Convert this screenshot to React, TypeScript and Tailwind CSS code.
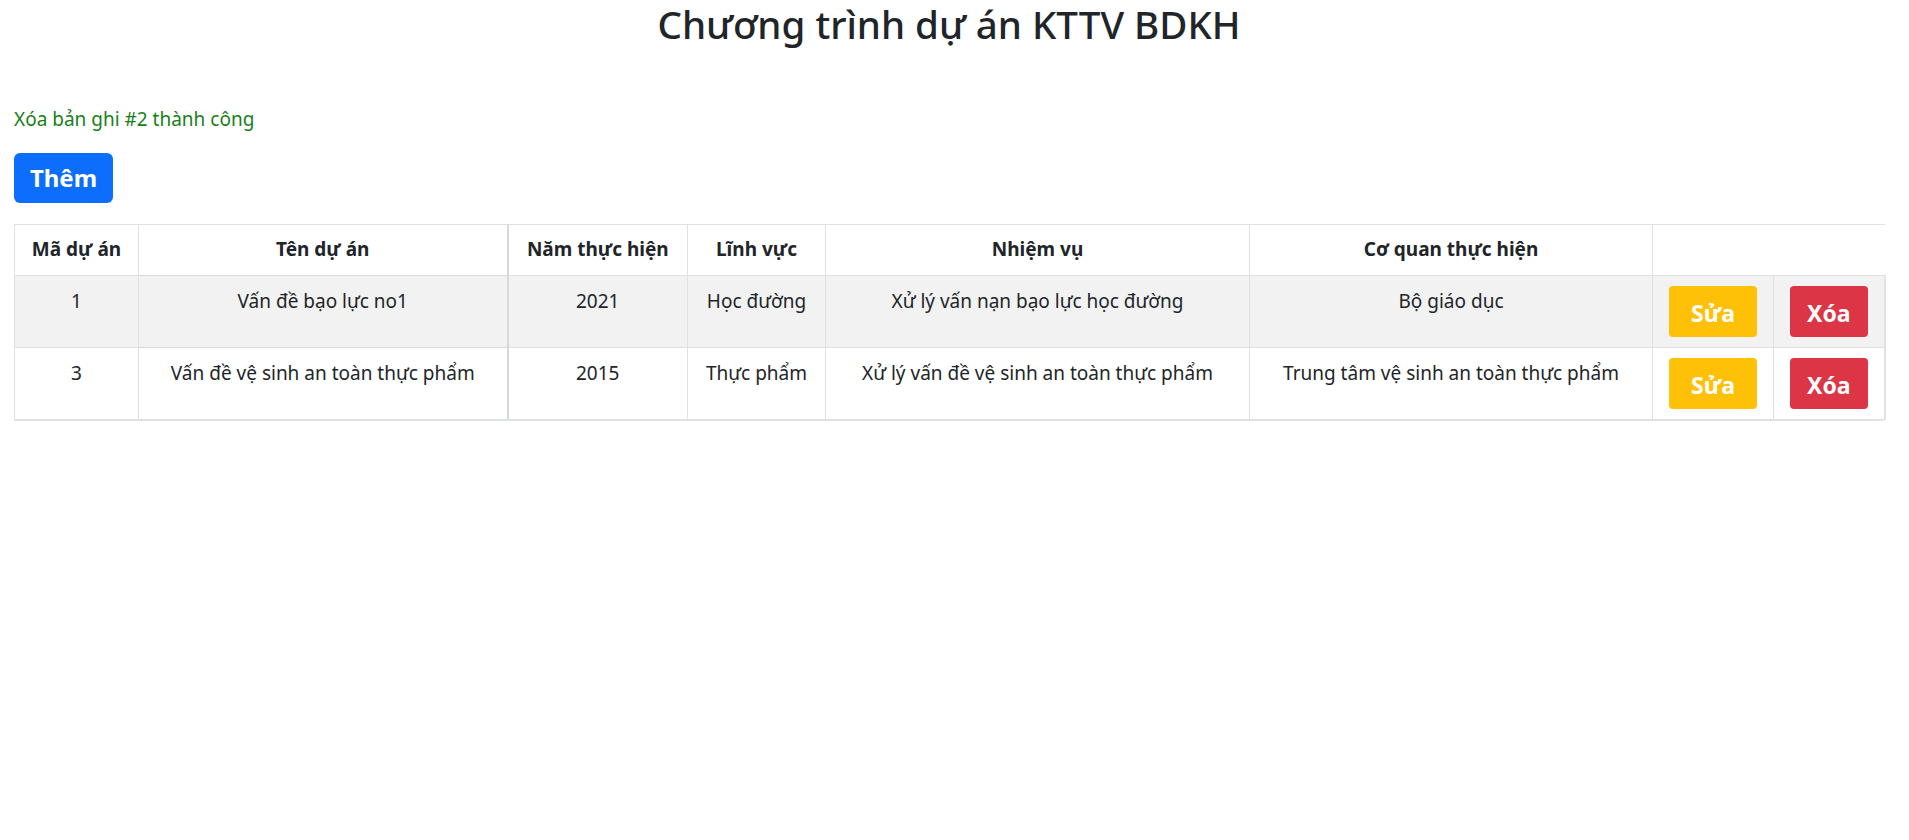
import React from 'react';

type Project = {
  id: number;
  name: string;
  year: number;
  field: string;
  task: string;
  agency: string;
};

const PROJECTS: Project[] = [
  { id: 1, name: 'Vấn đề bạo lực no1', year: 2021, field: 'Học đường', task: 'Xử lý vấn nạn bạo lực học đường', agency: 'Bộ giáo dục' },
  { id: 3, name: 'Vấn đề vệ sinh an toàn thực phẩm', year: 2015, field: 'Thực phẩm', task: 'Xử lý vấn đề vệ sinh an toàn thực phẩm', agency: 'Trung tâm vệ sinh an toàn thực phẩm' },
];

const font = { fontFamily: '"Noto Sans", "Open Sans", sans-serif' };

const App: React.FC = () => {
  return (
    <div className="min-h-[840px] bg-white text-[#212529] pl-[14px] pr-[25px]" style={font}>
      <h1 className="text-center text-[38.5px] font-medium leading-[46px] pt-[1px]">Chương trình dự án KTTV BDKH</h1>

      <p className="mt-[57px] text-[19px] leading-[30px] text-[#198019]">Xóa bản ghi #2 thành công</p>

      <button className="mt-[19px] h-[50px] w-[99px] rounded-[6px] bg-[#0d6efd] text-white text-[24px] font-bold">
        Thêm
      </button>

      <table className="mt-[21px] w-[1870px] table-fixed border-collapse text-[19px] leading-[30px]">
        <colgroup>
          <col className="w-[124px]" />
          <col className="w-[369px]" />
          <col className="w-[180px]" />
          <col className="w-[138px]" />
          <col className="w-[424px]" />
          <col className="w-[403px]" />
          <col className="w-[121px]" />
          <col className="w-[111px]" />
        </colgroup>
        <thead>
          <tr className="border-t border-[#dee2e6]">
            <th className="border-l border-r border-b border-[#dee2e6] px-[10px] pt-[9px] pb-[11px] font-bold">Mã dự án</th>
            <th className="border-r-2 border-b border-[#d6d9dc] px-[10px] pt-[9px] pb-[11px] font-bold">Tên dự án</th>
            <th className="border-r border-b border-[#dee2e6] px-[10px] pt-[9px] pb-[11px] font-bold">Năm thực hiện</th>
            <th className="border-r border-b border-[#dee2e6] px-[10px] pt-[9px] pb-[11px] font-bold">Lĩnh vực</th>
            <th className="border-r border-b border-[#dee2e6] px-[10px] pt-[9px] pb-[11px] font-bold">Nhiệm vụ</th>
            <th className="border-r border-b border-[#dee2e6] px-[10px] pt-[9px] pb-[11px] font-bold">Cơ quan thực hiện</th>
            <th colSpan={2} className="border-b border-[#dee2e6]"></th>
          </tr>
        </thead>
        <tbody>
          {PROJECTS.map((p, idx) => (
            <tr key={p.id} className={idx % 2 === 0 ? 'bg-[#f2f2f2]' : 'bg-white'}>
              <td className="border-l border-r border-b border-[#dee2e6] px-[10px] pt-[10px] align-top text-center">{p.id}</td>
              <td className="border-r-2 border-b border-[#d6d9dc] px-[10px] pt-[10px] align-top text-center">{p.name}</td>
              <td className="border-r border-b border-[#dee2e6] px-[10px] pt-[10px] align-top text-center">{p.year}</td>
              <td className="border-r border-b border-[#dee2e6] px-[10px] pt-[10px] align-top text-center">{p.field}</td>
              <td className="border-r border-b border-[#dee2e6] px-[10px] pt-[10px] align-top text-center">{p.task}</td>
              <td className="border-r border-b border-[#dee2e6] px-[10px] pt-[10px] align-top text-center">{p.agency}</td>
              <td className="border-r border-b border-[#dee2e6] py-[10px] align-top text-center">
                <button className="h-[51px] w-[88px] rounded-[4px] bg-[#ffc107] text-white text-[23px] font-bold pt-[3px]">Sửa</button>
              </td>
              <td className="border-r-2 border-b border-[#dee2e6] py-[10px] align-top text-center">
                <button className="h-[51px] w-[78px] rounded-[4px] bg-[#dc3545] text-white text-[23px] font-bold pt-[3px]">Xóa</button>
              </td>
            </tr>
          ))}
        </tbody>
      </table>
      <div className="w-[1870px] h-[2px] bg-[#dee2e6] -mt-[1px]"></div>
    </div>
  );
};

export default App;
